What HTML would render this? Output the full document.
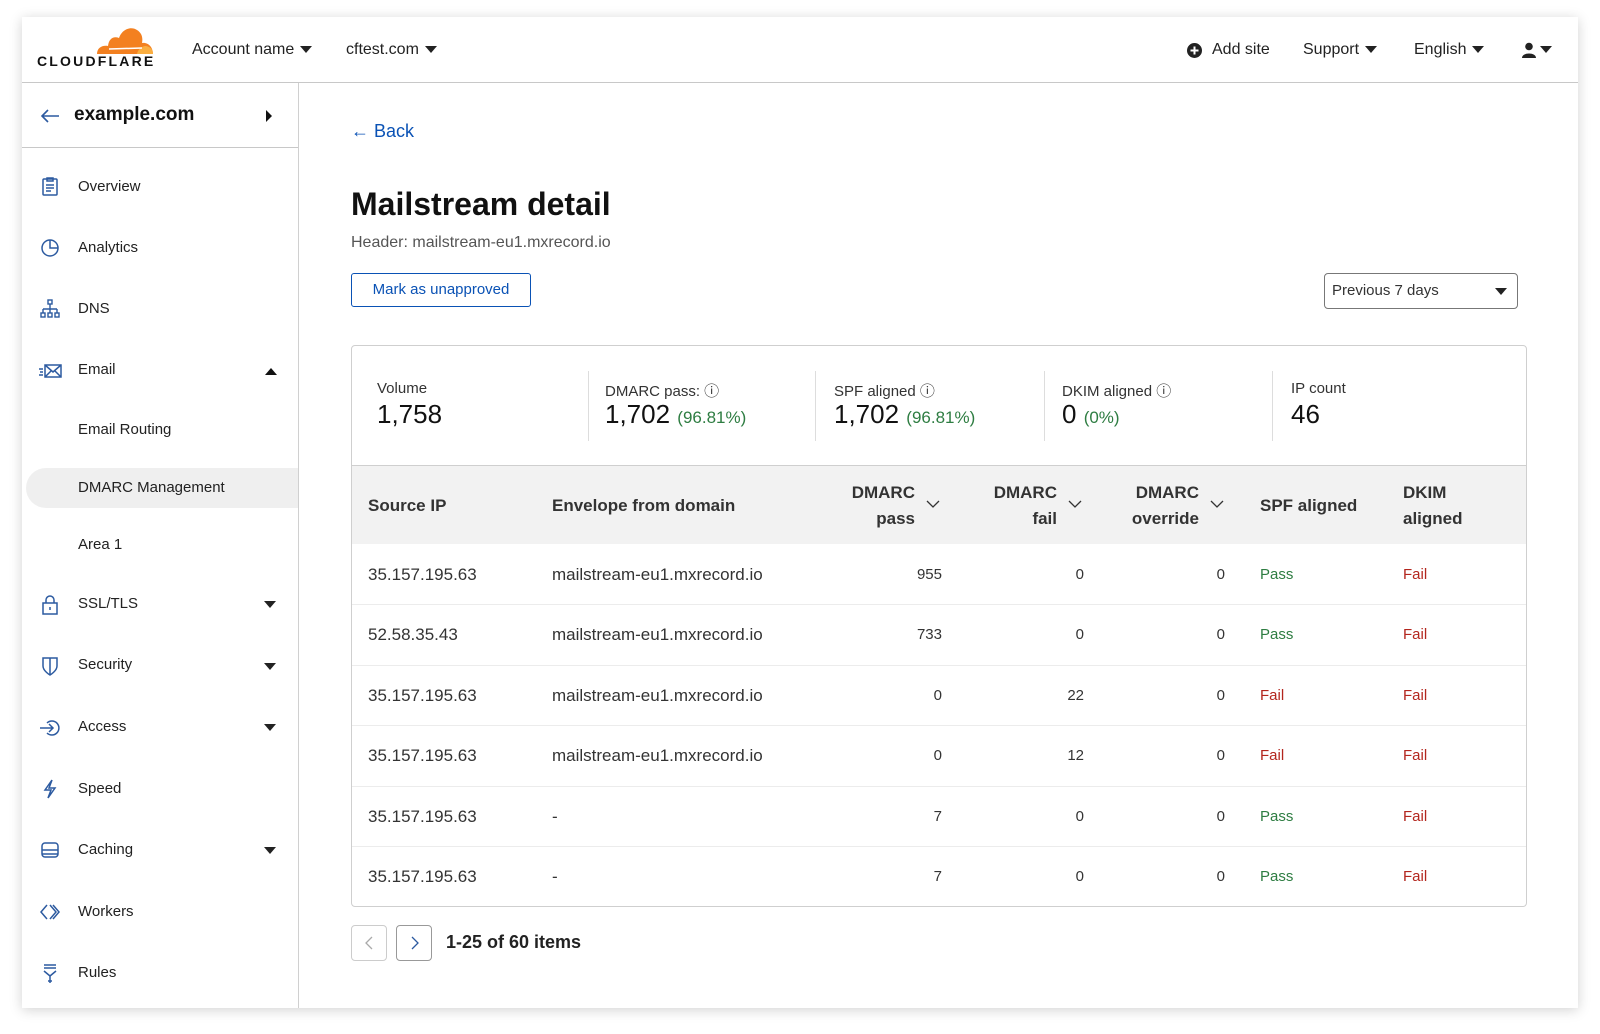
<!DOCTYPE html>
<html><head><meta charset="utf-8"><style>
*{box-sizing:border-box;margin:0;padding:0}
body{width:1600px;height:1034px;background:#fff;font-family:"Liberation Sans",Arial,sans-serif;color:#1d1d1d;position:relative;overflow:hidden}
.win{position:absolute;left:22px;top:17px;width:1556px;height:991px;background:#fff;box-shadow:0 2px 12px rgba(0,0,0,.18)}
.a{position:absolute;white-space:nowrap}
.tri{display:inline-block;width:0;height:0;border-left:6px solid transparent;border-right:6px solid transparent;border-top:7px solid #222;vertical-align:middle;margin-left:6px}
.nav{font-size:16px;color:#222}
.side{font-size:15px;color:#222}
.ico{position:absolute;left:40px;width:20px;height:20px}
.stl{font-size:15px;color:#333}
.stn{font-size:26px;color:#111}
.g{color:#2e7d42;font-size:17px}
.th{font-size:17px;font-weight:bold;color:#333;line-height:26px}
.td{font-size:17px;color:#333}
.num{font-size:15px;color:#333;text-align:right}
.pass{font-size:15px;color:#2e7d42}
.fail{font-size:15px;color:#b3261e}
.row{position:absolute;left:352px;width:1174px;height:1px;background:#ececec}
</style></head><body>
<div class="win"></div>
<!-- header -->
<svg class="a" style="left:95px;top:26px" width="58" height="28" viewBox="0 0 58 28"><path d="M2 28 C2 22 7 19 13 20 C14 12 19 10 24 12 C27 3 36 0 42 4 C47 7 48 12 47 17 C53 16 58 21 58 28 Z" fill="#f38020"/><path d="M42 28 C43 23 47 20 51 20 C56 21 58 24 58 28Z" fill="#faae40"/><path d="M14 23 L47 22" stroke="#fff" stroke-width="1.5"/></svg>
<div class="a" style="left:37px;top:53px;font-size:14px;font-weight:bold;letter-spacing:2.2px;color:#111">CLOUDFLARE</div>
<div class="a nav" style="left:192px;top:41px">Account name<span class="tri"></span></div>
<div class="a nav" style="left:346px;top:41px">cftest.com<span class="tri"></span></div>
<svg class="a" style="left:1187px;top:43px" width="15" height="15"><circle cx="7.5" cy="7.5" r="7.5" fill="#222"/><path d="M7.5 3.5v8M3.5 7.5h8" stroke="#fff" stroke-width="2"/></svg>
<div class="a nav" style="left:1212px;top:41px">Add site</div>
<div class="a nav" style="left:1303px;top:41px">Support<span class="tri"></span></div>
<div class="a nav" style="left:1414px;top:41px">English<span class="tri"></span></div>
<svg class="a" style="left:1521px;top:42px" width="16" height="16"><circle cx="8" cy="4.5" r="3.8" fill="#222"/><path d="M1 16 C1 10 15 10 15 16Z" fill="#222"/></svg>
<span class="a tri" style="left:1540px;top:46px;margin:0"></span>
<div class="a" style="left:22px;top:82px;width:1556px;height:1px;background:#c8c8c8"></div>
<!-- sidebar -->
<div class="a" style="left:298px;top:83px;width:1px;height:925px;background:#d0d0d0"></div>
<div class="a" style="left:22px;top:147px;width:276px;height:1px;background:#c8c8c8"></div>
<svg class="a" style="left:40px;top:108px" width="20" height="16"><path d="M19 8H2M8 2L2 8l6 6" stroke="#2c5aa0" stroke-width="1.6" fill="none"/></svg>
<div class="a" style="left:74px;top:104px;font-size:19px;font-weight:bold;color:#111">example.com</div>
<div class="a" style="left:266px;top:110px;width:0;height:0;border-top:6px solid transparent;border-bottom:6px solid transparent;border-left:6px solid #111"></div>
<div class="a" style="left:26px;top:468px;width:272px;height:40px;background:#efefef;border-radius:20px 0 0 20px"></div>
<svg class="ico" style="top:176px" viewBox="0 0 20 20" fill="none" stroke="#2c5aa0" stroke-width="1.5"><rect x="3" y="3" width="14" height="16" rx="1"/><path d="M7 2h6v3H7zM6 9h8M6 12h8M6 15h5"/></svg>
<div class="a side" style="left:78px;top:178px">Overview</div>
<svg class="ico" style="top:238px" viewBox="0 0 20 20" fill="none" stroke="#2c5aa0" stroke-width="1.5"><circle cx="10" cy="10" r="8"/><path d="M10 2v8h8"/></svg>
<div class="a side" style="left:78px;top:239px">Analytics</div>
<svg class="ico" style="top:299px" viewBox="0 0 20 20" fill="none" stroke="#2c5aa0" stroke-width="1.4"><rect x="8" y="1" width="4" height="4"/><path d="M10 5v5M3 10h14M3 10v4M10 10v4M17 10v4"/><rect x="1" y="14" width="4" height="4"/><rect x="8" y="14" width="4" height="4"/><rect x="15" y="14" width="4" height="4"/></svg>
<div class="a side" style="left:78px;top:300px">DNS</div>
<svg class="ico" style="top:361px;left:38px;width:24px" viewBox="0 0 24 20" fill="none" stroke="#2c5aa0" stroke-width="1.5"><rect x="7" y="4" width="16" height="12"/><path d="M7 4l8 7 8-7M7 16l6-6M23 16l-6-6M1 8h4M2 11h3M1 14h4"/></svg>
<div class="a side" style="left:78px;top:361px">Email</div>
<div class="a" style="left:265px;top:368px;width:0;height:0;border-left:6px solid transparent;border-right:6px solid transparent;border-bottom:7px solid #111"></div>
<div class="a side" style="left:78px;top:421px">Email Routing</div>
<div class="a side" style="left:78px;top:479px">DMARC Management</div>
<div class="a side" style="left:78px;top:536px">Area 1</div>
<svg class="ico" style="top:595px" viewBox="0 0 20 20" fill="none" stroke="#2c5aa0" stroke-width="1.5"><rect x="3" y="8" width="14" height="11"/><path d="M6 8V5a4 4 0 0 1 8 0v3M10 12v3"/></svg>
<div class="a side" style="left:78px;top:595px">SSL/TLS</div>
<span class="a tri" style="left:264px;top:601px;margin:0"></span>
<svg class="ico" style="top:656px" viewBox="0 0 20 20" fill="none" stroke="#2c5aa0" stroke-width="1.5"><path d="M3 2h14v8c0 5-7 9-7 9s-7-4-7-9z M10 2v17"/></svg>
<div class="a side" style="left:78px;top:656px">Security</div>
<span class="a tri" style="left:264px;top:663px;margin:0"></span>
<svg class="ico" style="top:718px" viewBox="0 0 20 20" fill="none" stroke="#2c5aa0" stroke-width="1.5"><path d="M7 5a7 7 0 1 1 0 10"/><path d="M0 10h13M9 6l4 4-4 4"/></svg>
<div class="a side" style="left:78px;top:718px">Access</div>
<span class="a tri" style="left:264px;top:724px;margin:0"></span>
<svg class="ico" style="top:779px" viewBox="0 0 20 20" fill="none" stroke="#2c5aa0" stroke-width="1.5"><path d="M12 1L5 11h6l-3 8 7-10H9z"/></svg>
<div class="a side" style="left:78px;top:780px">Speed</div>
<svg class="ico" style="top:840px" viewBox="0 0 20 20" fill="none" stroke="#2c5aa0" stroke-width="1.5"><rect x="2" y="3" width="16" height="14" rx="3"/><path d="M2 10h16M2 14h16"/></svg>
<div class="a side" style="left:78px;top:841px">Caching</div>
<span class="a tri" style="left:264px;top:847px;margin:0"></span>
<svg class="ico" style="top:902px" viewBox="0 0 20 20" fill="none" stroke="#2c5aa0" stroke-width="1.5"><path d="M7 3L1 10l6 7M10 3l6 7-6 7M13 3l6 7-6 7"/></svg>
<div class="a side" style="left:78px;top:903px">Workers</div>
<svg class="ico" style="top:963px" viewBox="0 0 20 20" fill="none" stroke="#2c5aa0" stroke-width="1.5"><path d="M4 2h12M4 5h12M4 8l6 5 6-5M10 13v7M8 18h4"/></svg>
<div class="a side" style="left:78px;top:964px">Rules</div>
<!-- main -->
<div class="a" style="left:351px;top:121px;font-size:18px;color:#0a52b5">← Back</div>
<div class="a" style="left:351px;top:186px;font-size:32px;font-weight:bold;color:#111">Mailstream detail</div>
<div class="a" style="left:351px;top:234px;font-size:16px;color:#555">Header: mailstream-eu1.mxrecord.io</div>
<div class="a" style="left:351px;top:273px;width:180px;height:34px;border:1.5px solid #0a52b5;border-radius:3px;color:#0a52b5;font-size:15px;text-align:center;line-height:31px">Mark as unapproved</div>
<div class="a" style="left:1324px;top:273px;width:194px;height:36px;border:1px solid #777;border-radius:4px;font-size:15px;color:#333;line-height:34px;padding-left:7px">Previous 7 days<span class="tri" style="position:absolute;right:10px;top:14px;margin:0"></span></div>
<!-- card -->
<div class="a" style="left:351px;top:345px;width:1176px;height:562px;border:1.5px solid #cfcfcf;border-radius:4px"></div>
<div class="a" style="left:588px;top:371px;width:1px;height:70px;background:#ddd"></div>
<div class="a" style="left:815px;top:371px;width:1px;height:70px;background:#ddd"></div>
<div class="a" style="left:1044px;top:371px;width:1px;height:70px;background:#ddd"></div>
<div class="a" style="left:1272px;top:371px;width:1px;height:70px;background:#ddd"></div>
<div class="a stl" style="left:377px;top:380px">Volume</div>
<div class="a stn" style="left:377px;top:399px">1,758</div>
<div class="a stl" style="left:605px;top:380px">DMARC pass: ⓘ</div>
<div class="a stn" style="left:605px;top:399px">1,702 <span class="g">(96.81%)</span></div>
<div class="a stl" style="left:834px;top:380px">SPF aligned ⓘ</div>
<div class="a stn" style="left:834px;top:399px">1,702 <span class="g">(96.81%)</span></div>
<div class="a stl" style="left:1062px;top:380px">DKIM aligned ⓘ</div>
<div class="a stn" style="left:1062px;top:399px">0 <span class="g">(0%)</span></div>
<div class="a stl" style="left:1291px;top:380px">IP count</div>
<div class="a stn" style="left:1291px;top:399px">46</div>
<div class="a" style="left:352px;top:465px;width:1174px;height:79px;background:#f2f2f2;border-top:1.5px solid #cfcfcf"></div>
<div class="a th" style="left:368px;top:493px">Source IP</div>
<div class="a th" style="left:552px;top:493px">Envelope from domain</div>
<div class="a th" style="left:815px;top:480px;width:100px;text-align:right">DMARC<br>pass</div>
<div class="a th" style="left:957px;top:480px;width:100px;text-align:right">DMARC<br>fail</div>
<div class="a th" style="left:1099px;top:480px;width:100px;text-align:right">DMARC<br>override</div>
<div class="a th" style="left:1260px;top:493px">SPF aligned</div>
<div class="a th" style="left:1403px;top:480px">DKIM<br>aligned</div>
<svg class="a" style="left:926px;top:500px" width="14" height="9"><path d="M1 1l6 6 6-6" stroke="#333" stroke-width="1.3" fill="none"/></svg>
<svg class="a" style="left:1068px;top:500px" width="14" height="9"><path d="M1 1l6 6 6-6" stroke="#333" stroke-width="1.3" fill="none"/></svg>
<svg class="a" style="left:1210px;top:500px" width="14" height="9"><path d="M1 1l6 6 6-6" stroke="#333" stroke-width="1.3" fill="none"/></svg>

<div class="row" style="top:604px"></div><div class="row" style="top:665px"></div><div class="row" style="top:725px"></div><div class="row" style="top:786px"></div><div class="row" style="top:846px"></div>

<div class="a td" style="left:368px;top:565px">35.157.195.63</div><div class="a td" style="left:552px;top:565px">mailstream-eu1.mxrecord.io</div>
<div class="a num" style="left:842px;top:566px;width:100px">955</div><div class="a num" style="left:984px;top:566px;width:100px">0</div><div class="a num" style="left:1125px;top:566px;width:100px">0</div>
<div class="a pass" style="left:1260px;top:566px">Pass</div><div class="a fail" style="left:1403px;top:566px">Fail</div>

<div class="a td" style="left:368px;top:625px">52.58.35.43</div><div class="a td" style="left:552px;top:625px">mailstream-eu1.mxrecord.io</div>
<div class="a num" style="left:842px;top:626px;width:100px">733</div><div class="a num" style="left:984px;top:626px;width:100px">0</div><div class="a num" style="left:1125px;top:626px;width:100px">0</div>
<div class="a pass" style="left:1260px;top:626px">Pass</div><div class="a fail" style="left:1403px;top:626px">Fail</div>

<div class="a td" style="left:368px;top:686px">35.157.195.63</div><div class="a td" style="left:552px;top:686px">mailstream-eu1.mxrecord.io</div>
<div class="a num" style="left:842px;top:687px;width:100px">0</div><div class="a num" style="left:984px;top:687px;width:100px">22</div><div class="a num" style="left:1125px;top:687px;width:100px">0</div>
<div class="a fail" style="left:1260px;top:687px">Fail</div><div class="a fail" style="left:1403px;top:687px">Fail</div>

<div class="a td" style="left:368px;top:746px">35.157.195.63</div><div class="a td" style="left:552px;top:746px">mailstream-eu1.mxrecord.io</div>
<div class="a num" style="left:842px;top:747px;width:100px">0</div><div class="a num" style="left:984px;top:747px;width:100px">12</div><div class="a num" style="left:1125px;top:747px;width:100px">0</div>
<div class="a fail" style="left:1260px;top:747px">Fail</div><div class="a fail" style="left:1403px;top:747px">Fail</div>

<div class="a td" style="left:368px;top:807px">35.157.195.63</div><div class="a td" style="left:552px;top:807px">-</div>
<div class="a num" style="left:842px;top:808px;width:100px">7</div><div class="a num" style="left:984px;top:808px;width:100px">0</div><div class="a num" style="left:1125px;top:808px;width:100px">0</div>
<div class="a pass" style="left:1260px;top:808px">Pass</div><div class="a fail" style="left:1403px;top:808px">Fail</div>

<div class="a td" style="left:368px;top:867px">35.157.195.63</div><div class="a td" style="left:552px;top:867px">-</div>
<div class="a num" style="left:842px;top:868px;width:100px">7</div><div class="a num" style="left:984px;top:868px;width:100px">0</div><div class="a num" style="left:1125px;top:868px;width:100px">0</div>
<div class="a pass" style="left:1260px;top:868px">Pass</div><div class="a fail" style="left:1403px;top:868px">Fail</div>
<!-- pagination -->
<div class="a" style="left:351px;top:925px;width:36px;height:36px;border:1px solid #ccc;border-radius:4px"></div>
<svg class="a" style="left:364px;top:936px" width="10" height="14"><path d="M8 1L2 7l6 6" stroke="#aaa" stroke-width="1.3" fill="none"/></svg>
<div class="a" style="left:396px;top:925px;width:36px;height:36px;border:1px solid #999;border-radius:4px"></div>
<svg class="a" style="left:410px;top:936px" width="10" height="14"><path d="M2 1l6 6-6 6" stroke="#2c5aa0" stroke-width="1.3" fill="none"/></svg>
<div class="a" style="left:446px;top:932px;font-size:18px;font-weight:bold;color:#222">1-25 of 60 items</div>
</body></html>
